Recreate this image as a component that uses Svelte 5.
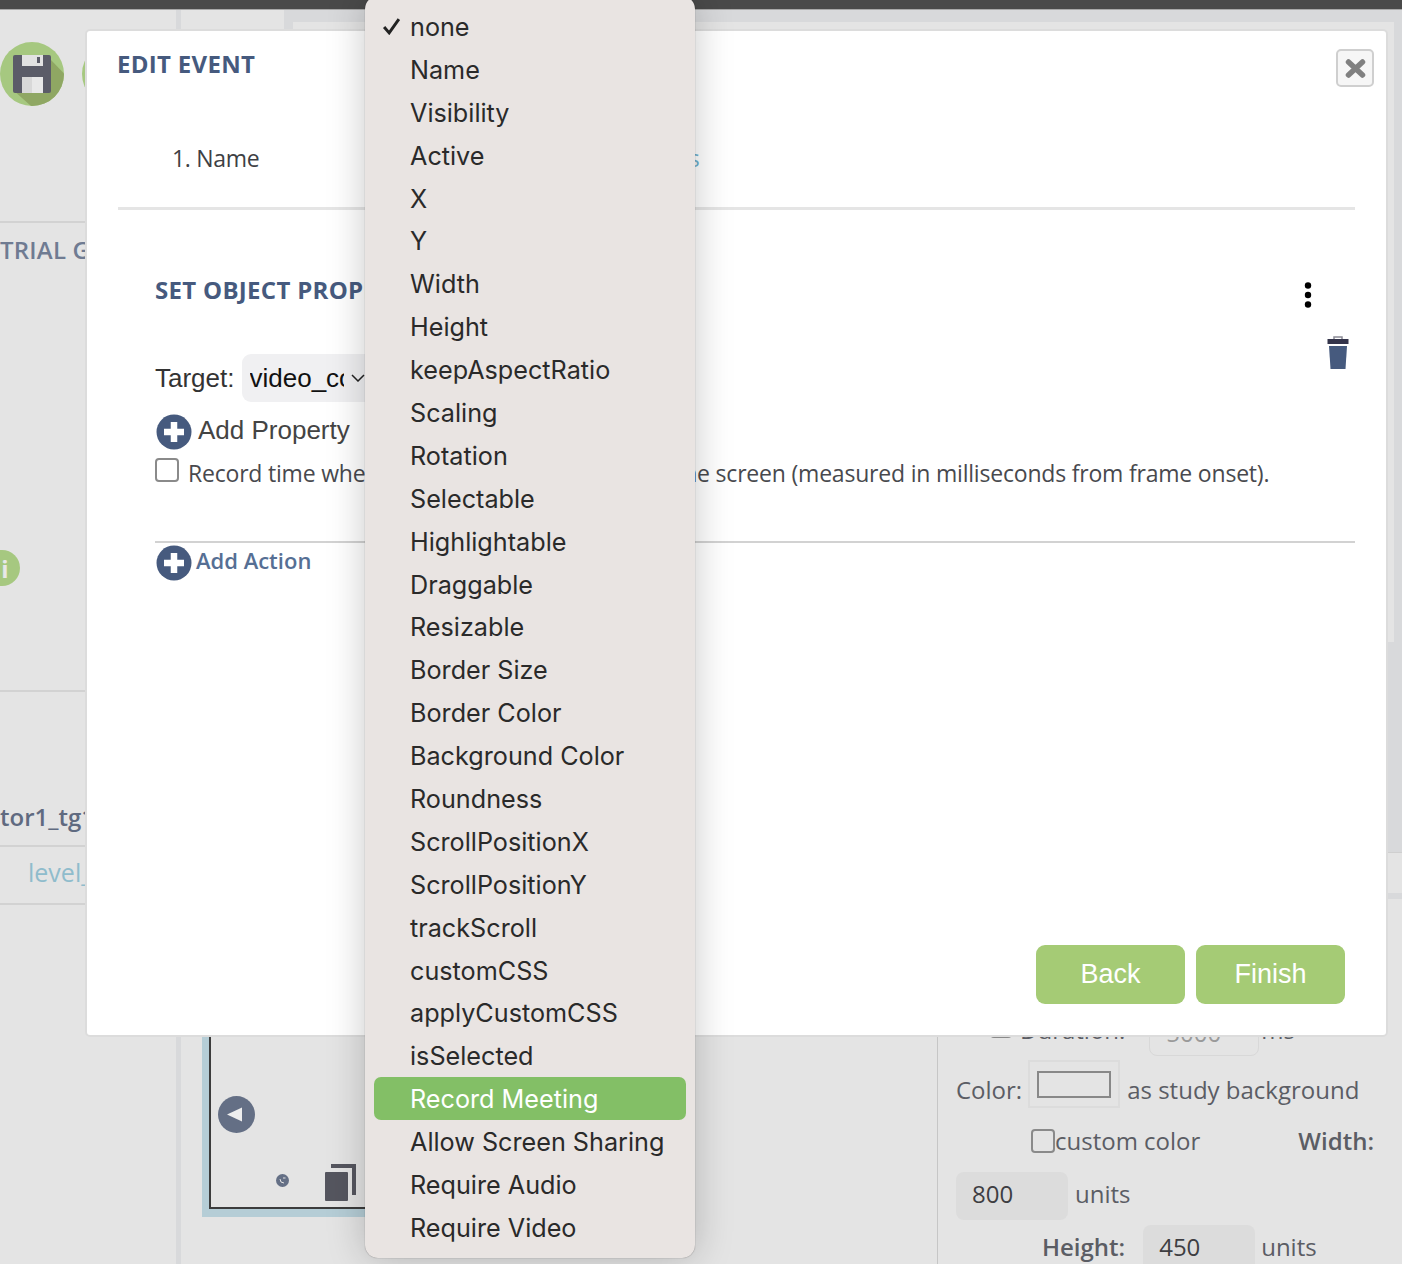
<script>
    // options of the property dropdown, top to bottom
    const options = [
        'none', 'Name', 'Visibility', 'Active', 'X', 'Y', 'Width', 'Height',
        'keepAspectRatio', 'Scaling', 'Rotation', 'Selectable', 'Highlightable',
        'Draggable', 'Resizable', 'Border Size', 'Border Color', 'Background Color',
        'Roundness', 'ScrollPositionX', 'ScrollPositionY', 'trackScroll', 'customCSS',
        'applyCustomCSS', 'isSelected', 'Record Meeting', 'Allow Screen Sharing',
        'Require Audio', 'Require Video'
    ];
    const checked = 'none';
    const active = 'Record Meeting';
</script>

<div class="page">
    <div class="topbar"></div>

    <div class="workspace">
        <!-- left sidebar -->
        <aside class="sidebar">
            <div class="tools">
                <svg class="save" width="64" height="64" viewBox="0 0 64 64">
                    <defs><clipPath id="disc"><circle cx="32" cy="32" r="32" /></clipPath></defs>
                    <circle cx="32" cy="32" r="32" fill="#a6c880" />
                    <polygon points="45,13 51,18 72,40 72,72 40,72 13,48" fill="#8fa763" clip-path="url(#disc)" />
                    <rect x="13" y="13" width="38" height="38" rx="2" fill="#5b5c68" />
                    <rect x="22" y="13" width="21" height="11" fill="#e2e2e2" />
                    <rect x="37" y="15" width="3" height="6" fill="#5b5c68" />
                    <rect x="22" y="35" width="21" height="16" fill="#e8e8e8" />
                    <rect x="22" y="35" width="10" height="16" fill="#d8d8d8" />
                </svg>
                <span class="disc-next"></span>
            </div>
            <div class="side-title">TRIAL GROUPS</div>
            <span class="info">i</span>
            <div class="side-name">tor1_tg1</div>
            <div class="side-level">level_1</div>
        </aside>

        <div class="vrule"></div>

        <!-- centre canvas -->
        <main class="center">
            <div class="tabstrip"><span class="tab"></span><span class="tab-rest"></span></div>
            <div class="frame">
                <div class="frame-inner">
                    <span class="nav-back">
                        <svg width="37" height="37" viewBox="0 0 37 37">
                            <circle cx="18.5" cy="18.5" r="18.5" fill="#646f85" />
                            <polygon points="9,18.5 24,11.5 24,25.5" fill="#eee" />
                        </svg>
                    </span>
                    <span class="nav-dot">
                        <svg width="13" height="13" viewBox="0 0 13 13">
                            <circle cx="6.5" cy="6.5" r="6.5" fill="#646f85" />
                            <path d="M4 5 Q4 9 8 9 M7 4 L9.5 4" stroke="#e4e4e4" stroke-width="1" fill="none" />
                        </svg>
                    </span>
                    <span class="nav-copy">
                        <svg width="32" height="38" viewBox="0 0 32 38">
                            <path d="M6 1 H31 V32 H27 V5 H6 Z" fill="#55565f" />
                            <rect x="0" y="9" width="23" height="29" rx="1" fill="#55565f" />
                        </svg>
                    </span>
                </div>
            </div>
        </main>

        <!-- right properties panel -->
        <section class="props">
            <div class="props-top"><span class="scrollbar"></span></div>
            <div class="props-head"></div>
            <div class="props-band"></div>
            <div class="props-body">
                <div class="row duration">
                    <span class="box small"></span>
                    <span class="dur-label">Duration:</span>
                    <span class="ghost-input">5000</span>
                    <span class="dur-unit">ms</span>
                </div>
                <div class="row color-row">
                    <span>Color:</span>
                    <span class="swatch"><span></span></span>
                    <span class="bg-note">as study background</span>
                </div>
                <div class="row custom-row">
                    <span class="box"></span>
                    <span>custom color</span>
                    <b>Width:</b>
                </div>
                <div class="row units-row">
                    <span class="num">800</span>
                    <span class="unit">units</span>
                </div>
                <div class="row height-row">
                    <b>Height:</b>
                    <span class="num">450</span>
                    <span class="unit">units</span>
                </div>
            </div>
        </section>
    </div>

    <!-- edit event dialog -->
    <div class="modal">
        <div class="modal-head">
            <h2>EDIT EVENT</h2>
            <button class="close" aria-label="Close">
                <svg width="21" height="19" viewBox="0 0 21 19">
                    <path d="M3.5 3 L17.5 16 M17.5 3 L3.5 16" stroke="#808080" stroke-width="5.5" stroke-linecap="round" />
                </svg>
            </button>
        </div>
        <div class="steps">
            <span class="step">1. Name</span>
            <span class="step todo">2. Trigger</span>
            <span class="step todo">3. Actions</span>
        </div>

        <div class="action">
            <div class="action-head">
                <h3>SET OBJECT PROPERTY</h3>
                <svg class="kebab" width="8" height="28" viewBox="0 0 8 28">
                    <circle cx="4" cy="4.5" r="3.2" /><circle cx="4" cy="14" r="3.2" /><circle cx="4" cy="23.5" r="3.2" />
                </svg>
            </div>
            <div class="target">
                <span>Target:</span>
                <span class="select">
                    <span class="select-value">video_component</span>
                    <svg width="14" height="8" viewBox="0 0 14 8"><path d="M1 1 L7 7 L13 1" fill="none" stroke="#222" stroke-width="1.5" /></svg>
                </span>
                <svg class="trash" width="22" height="33" viewBox="0 0 22 33">
                    <path d="M7 3 V1 H15 V3" fill="none" stroke="#8b8b95" stroke-width="1.5" />
                    <rect x="0.5" y="3" width="21" height="5" fill="#34344a" />
                    <polygon points="2,10 20,10 18.5,33 3.5,33" fill="#465a7e" />
                </svg>
            </div>
            <div class="add-prop">
                <svg width="36" height="36" viewBox="0 0 36 36">
                    <circle cx="18" cy="18" r="17.5" fill="#465a7e" />
                    <path d="M18 8 V28 M8 18 H28" stroke="#fff" stroke-width="6.5" />
                </svg>
                <span>Add Property</span>
            </div>
            <label class="record">
                <span class="box"></span>
                <span>Record time when this property is selected on the screen (measured in milliseconds from frame onset).</span>
            </label>
        </div>

        <div class="add-action">
            <svg width="36" height="36" viewBox="0 0 36 36">
                <circle cx="18" cy="18" r="17.5" fill="#465a7e" />
                <path d="M18 8 V28 M8 18 H28" stroke="#fff" stroke-width="6.5" />
            </svg>
            <span>Add Action</span>
        </div>

        <div class="buttons">
            <button class="green">Back</button>
            <button class="green">Finish</button>
        </div>
    </div>

    <!-- native select popup -->
    <ul class="menu">
        {#each options as option}
            <li class:active={option === active}>
                {#if option === checked}
                    <svg class="check" width="19" height="18" viewBox="0 0 18 17">
                        <path d="M2 9.5 L6.8 15 L16 2" fill="none" stroke="#222" stroke-width="2.8" />
                    </svg>
                {/if}
                {option}
            </li>
        {/each}
    </ul>
</div>

<style>
:global(body) { overflow: hidden; }
* { box-sizing: border-box; }
.page {
    position: relative; width: 1402px; height: 1264px; overflow: hidden;
    background: #e4e4e4; color: #55575e;
    font-family: "Open Sans", "Noto Sans", sans-serif;
}
.topbar { height: 10px; background: #4a4a4a; border-bottom: 1px solid #a8a8a8; }
.workspace { display: flex; height: 1254px; }

/* sidebar */
.sidebar { width: 176px; flex: none; }
.tools { display: flex; gap: 18px; padding: 32px 0 0 0; height: 213px; border-bottom: 2px solid #d2d2d2; }
.disc-next { width: 64px; height: 64px; border-radius: 50%; background: #a6c880; flex: none; }
.side-title {
    margin-top: 10px; font-size: 24px; line-height: 34px; font-weight: 600;
    color: #6f7b92; white-space: nowrap; letter-spacing: .2px;
}
.info {
    display: flex; align-items: center; justify-content: center;
    width: 36px; height: 36px; margin: 283px 0 0 -16px; padding-left: 6px; border-radius: 50%;
    background: #a6c880; color: #e8e8e8; font-size: 24px; font-weight: 700;
}
.side-name {
    margin-top: 104px; padding-top: 108px; height: 157px; font-size: 24px; line-height: 34px;
    font-weight: 600; color: #5f6a80; border-top: 2px solid #d2d2d2; border-bottom: 2px solid #d2d2d2; white-space: nowrap;
}
.side-level {
    height: 58px; padding: 8px 0 0 28px; font-size: 25px; line-height: 34px;
    color: #8fbccc; border-bottom: 2px solid #d2d2d2; white-space: nowrap;
}
.vrule { width: 5px; flex: none; background: #d8d9db; }

/* centre */
.center { width: 756px; flex: none; }
.tabstrip { display: flex; height: 19px; }
.tab { width: 103px; }
.tab-rest {
    flex: 1;
    background: linear-gradient(to right, #d8d9db 9px, transparent 9px), linear-gradient(#d8d9db 12px, transparent 12px);
}
.frame {
    width: 400px; height: 1155px; margin: 33px 0 0 21px;
    background: #b5cdd6; padding: 0 0 8px 7px;
}
.frame-inner {
    position: relative; height: 100%; background: #e4e4e4;
    border-left: 2px solid #3c3c3c; border-bottom: 2px solid #3c3c3c;
}
.frame-inner span { position: absolute; display: block; line-height: 0; }
.nav-back { left: 7px; bottom: 74px; }
.nav-dot { left: 65px; bottom: 20px; }
.nav-copy { left: 114px; bottom: 6px; }

/* right panel */
.props { flex: 1; min-width: 0; }
.props-top { position: relative; height: 842px; background: linear-gradient(#d8d9db 12px, #e4e4e4 12px); }
.props-top::after {
    content: ""; position: absolute; left: 451px; right: 0; top: 0; bottom: 0; background: #d8d9db;
}
.scrollbar { position: absolute; left: 451px; top: 12px; width: 6px; height: 620px; background: #e4e4e4; z-index: 1; }
.props-head { height: 41px; border-top: 1px solid #cfcfcf; }
.props-band { height: 6px; background: #d8d9db; }
.props-body {
    height: 400px; padding: 159px 0 0 18px; border-left: 1px solid #c6c6c6;
    font-size: 24px; line-height: 34px; color: #5b5d64; white-space: nowrap;
}
.row { display: flex; align-items: center; }
.row b { font-weight: 600; }
.box {
    display: block; width: 24px; height: 24px; flex: none;
    border: 2px solid #8a8a8a; border-radius: 4px; background: transparent;
}
.duration { height: 46px; margin-top: -48px; align-items: flex-start; }
.box.small { width: 22px; height: 22px; margin: 6px 0 0 34px; }
.dur-label { margin: 3px 0 0 8px; }
.ghost-input { width: 110px; height: 46px; margin-left: 24px; padding: 0 16px; border: 1px solid #d8d8d8; border-radius: 8px; line-height: 44px; color: #9a9a9a; }
.dur-unit { margin: 3px 0 0 2px; }
.color-row { height: 48px; margin-top: 10px; gap: 6px; }
.swatch { display: flex; align-items: center; justify-content: center; width: 92px; height: 48px; margin-top: -12px; border: 2px solid #dcdcdc; }
.swatch span { display: block; width: 74px; height: 27px; border: 2px solid #888; }
.bg-note { margin-left: 1px; }
.custom-row { height: 36px; margin-top: 9px; padding-left: 75px; }
.custom-row b { margin-left: 98px; }
.units-row { height: 48px; margin-top: 13px; gap: 7px; }
.num { display: block; width: 112px; height: 48px; padding-left: 16px; border-radius: 8px; background: #dcdcdc; line-height: 44px; color: #3e3e42; }
.unit { margin-top: -4px; }
.height-row { height: 48px; margin-top: 5px; padding-left: 86px; gap: 18px; }
.height-row b { margin-top: -4px; }
.height-row .num + span { margin-left: -12px; }

/* dialog */
.modal {
    position: absolute; left: 85px; top: 29px; width: 1303px; height: 1008px;
    display: flex; flex-direction: column;
    background: #fff; border: 2px solid #dcdcdc; border-radius: 5px;
    padding: 18px 31px 31px 31px;
}
.modal-head { display: flex; justify-content: space-between; height: 70px; color: #465a7e; }
h2 { margin: -2px 0 0 -1px; font-size: 24px; line-height: 34px; font-weight: 700; color: #465a7e; letter-spacing: .3px; }
.close {
    width: 38px; height: 38px; margin: 0 -19px 0 0; padding: 0;
    display: flex; align-items: center; justify-content: center;
    background: #f6f6f6; border: 2px solid #cfcfcf; border-radius: 5px;
}
.steps { display: flex; gap: 121px; height: 91px; padding: 22px 0 0 54px; border-bottom: 3px solid #e5e5e5; }
.step { font-size: 23px; line-height: 34px; color: #3e3f44; white-space: nowrap; letter-spacing: -.3px; }
.step.todo { color: #6fb0cc; }

.action { margin: 0 0 0 37px; height: 333px; border-bottom: 2px solid #d2d2d2; padding-top: 63px; }
.action-head { display: flex; justify-content: space-between; align-items: center; height: 34px; padding-right: 43px; }
h3 { margin: 0; font-size: 24px; line-height: 34px; font-weight: 700; color: #465a7e; letter-spacing: .3px; }
.kebab { fill: #000; margin-top: 10px; }
.target { display: flex; align-items: center; height: 48px; margin-top: 47px; font-size: 26px; color: #333; font-family: "Liberation Sans", Arial, sans-serif; }
.select {
    display: flex; align-items: center; width: 200px; height: 48px; margin-left: 7px; padding-left: 8px;
    background: #f0f0f2; border-radius: 9px; color: #111;
}
.select-value { width: 94px; overflow: hidden; white-space: nowrap; margin-right: 7px; }
.trash { margin-left: auto; margin-right: 6px; margin-top: -52px; }
.add-prop { display: flex; align-items: center; gap: 6px; height: 36px; margin-top: 12px; padding-left: 1px; font-size: 26px; color: #444; font-family: "Liberation Sans", Arial, sans-serif; }
.add-prop span { margin-top: -4px; }
.record { display: flex; align-items: center; gap: 9px; height: 36px; margin-top: 5px; font-size: 23px; letter-spacing: -.2px; color: #48494e; white-space: nowrap; }
.record .box { margin-top: -6px; background: #fff; }

.add-action { display: flex; align-items: center; gap: 4px; height: 36px; margin: 2px 0 0 38px; font-size: 22px; font-weight: 600; color: #566f94; }
.add-action span { margin-top: -6px; }

.buttons { display: flex; gap: 11px; justify-content: flex-end; margin-top: auto; padding-right: 10px; }
.green {
    width: 149px; height: 59px; border: none; border-radius: 9px; background: #a5cb75;
    color: #fff; font-size: 27px; font-family: "Liberation Sans", Arial, sans-serif;
}

/* popup menu */
.menu {
    position: absolute; left: 365px; top: -4px; width: 330px; height: 1262px; margin: 0; padding: 9px 9px 0;
    list-style: none; background: #e9e4e2; border-radius: 13px;
    box-shadow: 0 0 1px rgba(0,0,0,.5), 0 0 38px rgba(0,0,0,.22);
    font-family: "Inter", "Liberation Sans", sans-serif; font-size: 25.2px; color: #2a2a2a;
}
.menu li { position: relative; height: 42.9px; line-height: 45px; padding-left: 36px; border-radius: 7px; white-space: nowrap; }
.menu li.active { background: #83bf66; color: #fff; }
.check { position: absolute; left: 8px; top: 12px; }
</style>
